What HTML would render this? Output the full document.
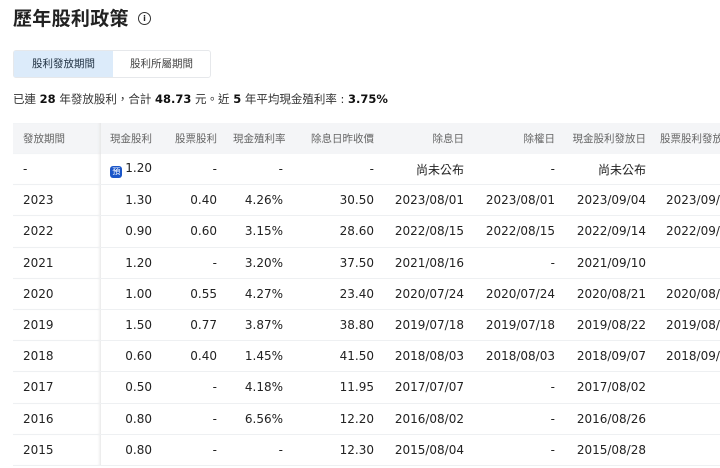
<!DOCTYPE html>
<html><head><meta charset="utf-8"><style>
body{margin:0;width:720px;height:468px;overflow:hidden;background:#fff;font-family:"DejaVu Sans","Noto Sans CJK TC",sans-serif;color:#222;position:relative}
h1{position:absolute;left:13px;top:4px;margin:0;font-size:19px;font-weight:bold;font-family:"Noto Sans CJK TC",sans-serif;letter-spacing:0.3px}
.info{position:absolute;left:138px;top:12px;width:11px;height:11px;border:1.3px solid #333;border-radius:50%;font-size:8px;text-align:center;line-height:11px;font-weight:bold;font-family:"DejaVu Sans",sans-serif}
.tabs{position:absolute;left:13px;top:50px;width:196px;height:26px;border:1px solid #e6e8eb;border-radius:3px;display:flex;font-size:10.5px;font-family:"Noto Sans CJK TC",sans-serif}
.tabs div{flex:1;text-align:center;line-height:26px;color:#444}
.tabs .on{background:#dcebfa;color:#234;flex:0 0 99px}
.sum{position:absolute;left:13px;top:91px;font-size:11.5px;color:#333;font-family:"DejaVu Sans","Noto Sans CJK TC",sans-serif}
.sum b{color:#111}
table{position:absolute;left:13px;top:123px;border-collapse:collapse;table-layout:fixed;width:732px;font-size:12px}
td,th{padding:0 8px;text-align:right;white-space:nowrap;overflow:hidden;border-bottom:1px solid #eef0f2}
th{height:31px;background:#f4f5f7;font-weight:normal;font-size:10.5px;color:#666;font-family:"Noto Sans CJK TC",sans-serif;border-bottom:none}
td{height:30.2px;color:#222}
td:first-child,th:first-child{text-align:left;padding-left:10px;box-shadow:inset -3px 0 3px -2px #e2e2e2}
.cj{font-family:"Noto Sans CJK TC",sans-serif;font-size:12px}
.bd{display:inline-block;width:12px;height:12px;background:#1b56c9;color:#fff;font-size:8px;line-height:12px;text-align:center;border-radius:3px;vertical-align:-2px;margin-right:3px;font-family:"Noto Sans CJK TC",sans-serif}
.l{text-align:left!important;padding-left:12px!important}
</style></head><body>
<h1>歷年股利政策</h1><div class="info">i</div>
<div class="tabs"><div class="on">股利發放期間</div><div>股利所屬期間</div></div>
<div class="sum">已連 <b>28</b> 年發放股利，合計 <b>48.73</b> 元。近 <b>5</b> 年平均現金殖利率 : <b>3.75%</b></div>
<table>
<colgroup><col style="width:88px"><col style="width:59px"><col style="width:65px"><col style="width:66px"><col style="width:91px"><col style="width:90px"><col style="width:91px"><col style="width:91px"><col style="width:91px"></colgroup>
<tr><th>發放期間</th><th>現金股利</th><th>股票股利</th><th>現金殖利率</th><th>除息日昨收價</th><th>除息日</th><th>除權日</th><th>現金股利發放日</th><th class="l" style="padding-left:6px!important">股票股利發放日</th></tr>
<tr><td>-</td><td><span class="bd">預</span>1.20</td><td>-</td><td>-</td><td>-</td><td class="cj">尚未公布</td><td>-</td><td class="cj">尚未公布</td><td></td></tr>
<tr><td>2023</td><td>1.30</td><td>0.40</td><td>4.26%</td><td>30.50</td><td>2023/08/01</td><td>2023/08/01</td><td>2023/09/04</td><td class="l">2023/09/04</td></tr>
<tr><td>2022</td><td>0.90</td><td>0.60</td><td>3.15%</td><td>28.60</td><td>2022/08/15</td><td>2022/08/15</td><td>2022/09/14</td><td class="l">2022/09/14</td></tr>
<tr><td>2021</td><td>1.20</td><td>-</td><td>3.20%</td><td>37.50</td><td>2021/08/16</td><td>-</td><td>2021/09/10</td><td></td></tr>
<tr><td>2020</td><td>1.00</td><td>0.55</td><td>4.27%</td><td>23.40</td><td>2020/07/24</td><td>2020/07/24</td><td>2020/08/21</td><td class="l">2020/08/21</td></tr>
<tr><td>2019</td><td>1.50</td><td>0.77</td><td>3.87%</td><td>38.80</td><td>2019/07/18</td><td>2019/07/18</td><td>2019/08/22</td><td class="l">2019/08/22</td></tr>
<tr><td>2018</td><td>0.60</td><td>0.40</td><td>1.45%</td><td>41.50</td><td>2018/08/03</td><td>2018/08/03</td><td>2018/09/07</td><td class="l">2018/09/07</td></tr>
<tr><td>2017</td><td>0.50</td><td>-</td><td>4.18%</td><td>11.95</td><td>2017/07/07</td><td>-</td><td>2017/08/02</td><td></td></tr>
<tr><td>2016</td><td>0.80</td><td>-</td><td>6.56%</td><td>12.20</td><td>2016/08/02</td><td>-</td><td>2016/08/26</td><td></td></tr>
<tr><td>2015</td><td>0.80</td><td>-</td><td>-</td><td>12.30</td><td>2015/08/04</td><td>-</td><td>2015/08/28</td><td></td></tr>
</table>
</body></html>
